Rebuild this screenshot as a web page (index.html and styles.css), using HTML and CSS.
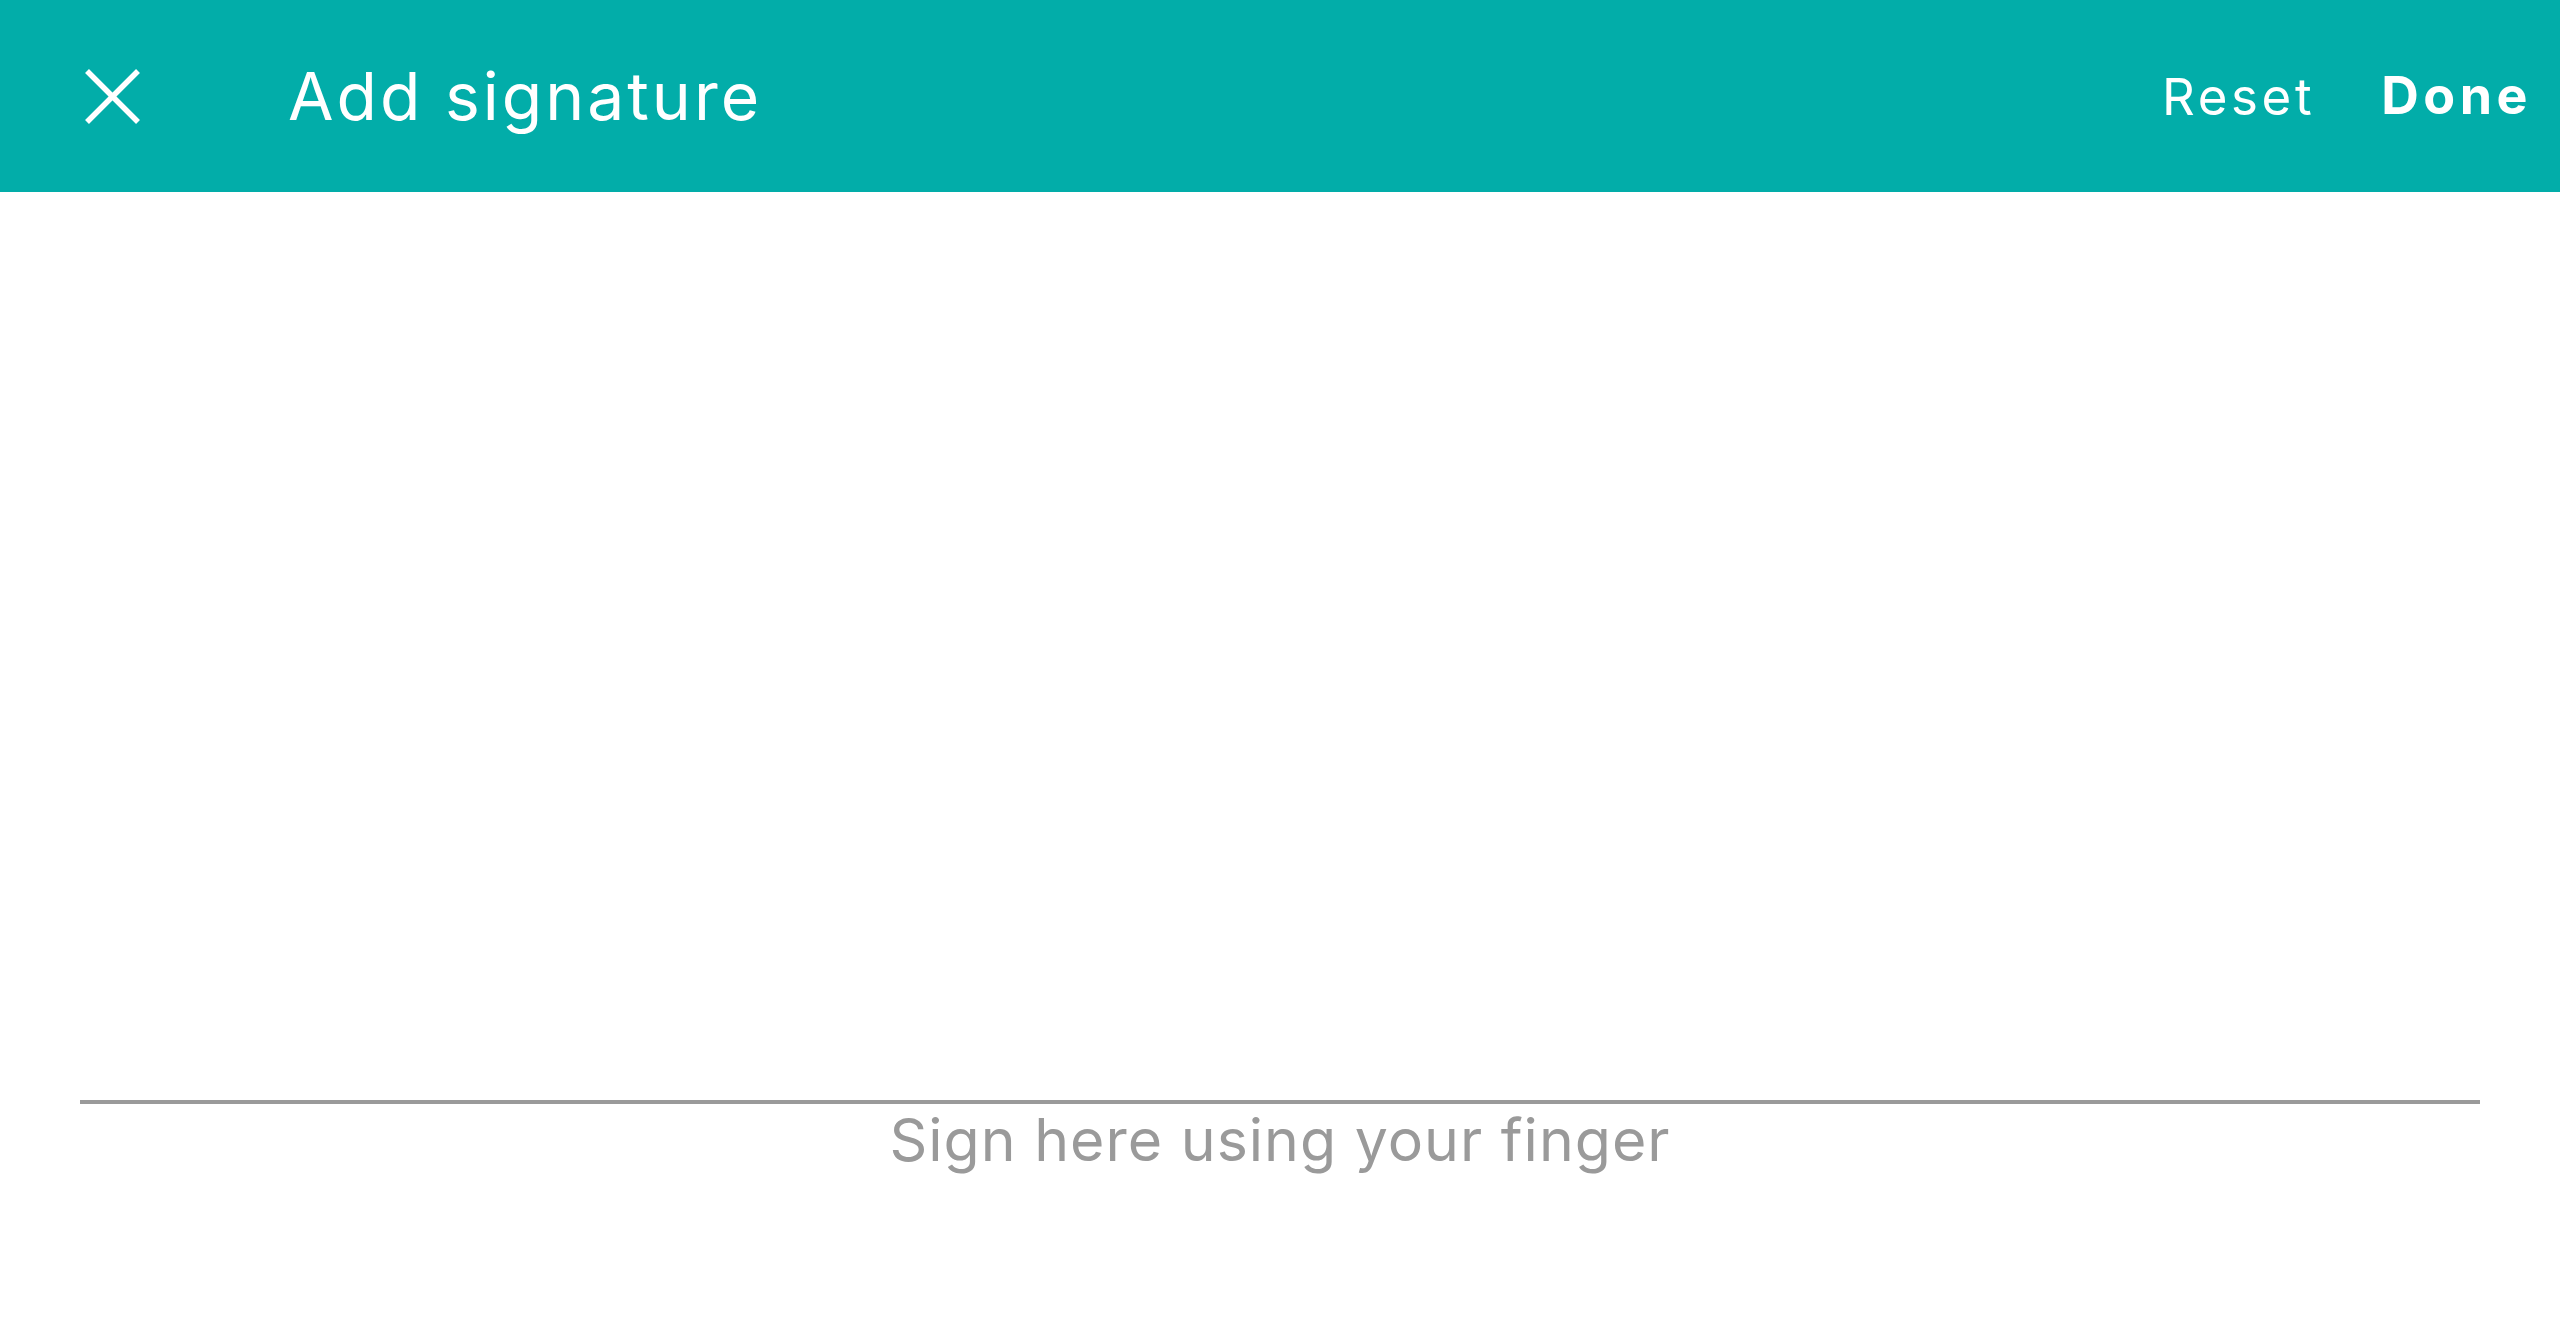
FILE: index.html
```html
<!DOCTYPE html>
<html lang="en">
<head>
<meta charset="utf-8">
<title>Add signature</title>
<link rel="stylesheet" href="styles.css">
</head>
<body>
<header class="topbar">
  <button class="close-btn" aria-label="Close">
    <svg class="close-icon" viewBox="0 0 55 55" width="55" height="55">
      <line x1="2" y1="2" x2="53" y2="53"/>
      <line x1="53" y1="2" x2="2" y2="53"/>
    </svg>
  </button>
  <h1 class="title">Add signature</h1>
  <div class="actions">
    <button class="action reset">Reset</button>
    <button class="action done">Done</button>
  </div>
</header>
<main class="pad">
  <div class="canvas"></div>
  <p class="hint">Sign here using your finger</p>
</main>
</body>
</html>
```
FILE: styles.css
```css
html, body {
  margin: 0;
  padding: 0;
  background: #ffffff;
  font-family: "Inter", "Liberation Sans", sans-serif;
}

.topbar {
  height: 192px;
  background: #02ADA9;
  display: flex;
  align-items: center;
  padding: 0 28px 0 85px;
  box-sizing: border-box;
  color: #ffffff;
}

.close-btn {
  background: none;
  border: 0;
  padding: 0;
  width: 55px;
  height: 55px;
  display: flex;
  cursor: pointer;
}

.close-icon line {
  stroke: #ffffff;
  stroke-width: 5.5;
  stroke-linecap: butt;
}

.title {
  margin: 0 0 0 148px;
  font-size: 66px;
  font-weight: 400;
  line-height: 1;
  letter-spacing: 3px;
  flex: 1;
}

.actions {
  display: flex;
  align-items: center;
  gap: 66px;
}

.action {
  background: none;
  border: 0;
  padding: 0;
  color: #ffffff;
  font-family: "Inter", "Liberation Sans", sans-serif;
  line-height: 1;
  cursor: pointer;
}

.reset {
  font-size: 51px;
  font-weight: 400;
  letter-spacing: 3.6px;
}

.done {
  font-size: 52px;
  font-weight: 700;
  letter-spacing: 4.5px;
}

.pad {
  padding: 0 80px;
}

.canvas {
  height: 908px;
  border-bottom: 4px solid #9a9a9a;
}

.hint {
  margin: 0;
  text-align: center;
  color: #9a9a9a;
  font-size: 59px;
  line-height: 71px;
  font-weight: 400;
  letter-spacing: 1px;
}
```
